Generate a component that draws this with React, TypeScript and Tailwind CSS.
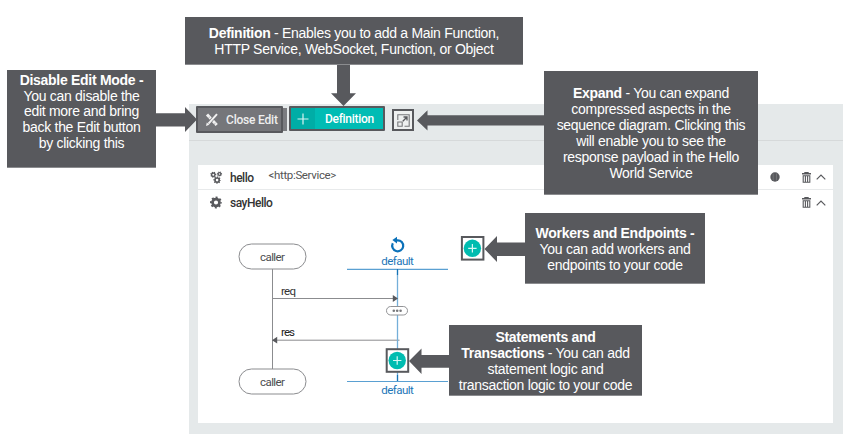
import React from "react";

function Callout({ box, lines }: { box: string; lines: React.ReactNode[] }) {
  return (
    <div className={`absolute flex flex-col items-center border-b border-[#8b8c8f] bg-[#58595d] text-center font-['Liberation_Sans',Arial,sans-serif] text-[14px] tracking-[-0.29px] text-white ${box}`}>
      {lines.map((line, i) => (
        <p key={i} className="whitespace-nowrap">{line}</p>
      ))}
    </div>
  );
}

function Gear({ cx, cy, r, hole }: { cx: number; cy: number; r: number; hole: number }) {
  const body = r * 0.8;
  const tooth = (body * Math.PI) / 8;
  return (
    <g fill="none" stroke="#58595d">
      <circle cx={cx} cy={cy} r={(body + hole) / 2} strokeWidth={body - hole} />
      <circle cx={cx} cy={cy} r={body} strokeWidth={(r - body) * 2} strokeDasharray={`${tooth} ${tooth}`} strokeDashoffset={tooth / 2} />
    </g>
  );
}

function Trash() {
  return (
    <svg className="h-[11px] w-[9px]" viewBox="0 0 9 11">
      <path d="M3 1V.5h3V1M0 1.8h9" stroke="#58595d" strokeWidth="1.4" fill="none" />
      <path d="M1.2 3.8h6.6v6.4H1.2zM3.4 4v6M5.6 4v6" stroke="#58595d" strokeWidth="1.1" fill="none" />
    </svg>
  );
}

function Chevron() {
  return (
    <svg className="h-[6px] w-[10px]" viewBox="0 0 10 6">
      <path d="M.7 5.3 5 1l4.3 4.3" stroke="#58595d" strokeWidth="1.2" fill="none" />
    </svg>
  );
}

function Plus({ cx, cy }: { cx: number; cy: number }) {
  return (
    <g>
      <rect x={cx - 10.5} y={cy - 11.3} width="21.5" height="22.6" fill="#fff" stroke="#58595d" strokeWidth="2" />
      <circle cx={cx} cy={cy} r="8.7" fill="#00bcb0" />
      <path d={`M${cx - 4.2} ${cy}h8.4M${cx} ${cy - 4.2}v8.4`} stroke="#d7f7f4" strokeWidth="1.2" />
    </g>
  );
}

function Diagram() {
  return (
    <svg className="block h-[208px] w-[635px] font-[Roboto,sans-serif] text-[11.5px]" viewBox="198 215 635 208">
      <g fill="none" stroke="#8b8c8f" strokeWidth="1">
        <path d="M272.5 269v100" />
        <rect x="239" y="244" width="67" height="25" rx="12.5" />
        <rect x="239" y="369" width="67" height="25" rx="12.5" />
        <path d="M272 298.5h122M277 340.2h122.500" />
      </g>
      <path d="M347 269.300h101M347 381.500h101" stroke="#5aa0d2" strokeWidth="1.2" />
      <path d="M397.500 269v112" stroke="#74afd9" strokeWidth="1.3" />
      <path d="M397.500 269v6M397.500 375v6" stroke="#1673b5" strokeWidth="1.2" />
      <path d="M392.800 295.100l5.200 3.400-5.200 3.400zM277.200 336.800l-5.200 3.400 5.200 3.400z" fill="#58595d" />
      <rect x="386.500" y="306.500" width="21" height="8.500" rx="4.200" fill="#fff" stroke="#929396" />
      <g fill="#77787b">
        <circle cx="393.800" cy="310.700" r="1.300" />
        <circle cx="397.200" cy="310.700" r="1.300" />
        <circle cx="400.600" cy="310.700" r="1.300" />
      </g>
      <path d="M392.800 243.300a5.500 5.500 0 1 0 4.700-3h-2" stroke="#0b71b9" strokeWidth="2.200" fill="none" />
      <path d="M397 236.800v6.600l-4.600-3.300z" fill="#0b71b9" />
      <g fill="#4c4d50" textAnchor="middle">
        <text x="272.500" y="261" textLength="25">caller</text>
        <text x="272.500" y="386" textLength="25">caller</text>
      </g>
      <text x="281" y="294.500" textLength="15" fill="#333">req</text>
      <text x="281" y="336" textLength="14" fill="#222">res</text>
      <g fill="#1c76b8" textAnchor="middle">
        <text x="397.500" y="265" textLength="32.500">default</text>
        <text x="397.500" y="394.300" textLength="32.500">default</text>
      </g>
      <Plus cx={472.4} cy={248.3} />
      <Plus cx={397.2} cy={360.5} />
    </svg>
  );
}

function Toolbar() {
  return (
    <div className="flex h-[37px] items-start border-b border-[#d6d9da] pl-[7px] pt-[2px] font-[Roboto,sans-serif] text-[12px] font-medium text-white">
      <button className="flex h-[27px] w-[87px] items-center rounded-[1px] border-2 border-[#58595d] bg-[#75767a] pl-[7px]">
        <svg className="h-[14px] w-[14px]" viewBox="0 0 14 14">
          <path d="M2 1.600l9.700 10.400" stroke="#f1f1f1" strokeWidth="3" />
          <path d="M3.400 5.200l1.200-1.100M9.200 11.300l1.200-1.100" stroke="#75767a" strokeWidth=".7" />
          <path d="M11.500 1.500 3.300 10.800" stroke="#75767a" strokeWidth="3.400" />
          <path d="M12 1.200 3.500 10.600" stroke="#f1f1f1" strokeWidth="2" />
          <path d="M1 13l.8-3.500 2.600 2.200z" fill="#f1f1f1" />
        </svg>
        <span className="ml-[7px] whitespace-nowrap tracking-[-0.2px] text-[#eeeeee]">Close Edit</span>
      </button>
      <span className="mt-[2px] h-[23px] w-[4px] bg-[#7b7c80]" />
      <button className="ml-[2px] flex h-[25px] w-[96px] items-center rounded-[1px] border-2 border-[#58595d] bg-[#00bcb4]">
        <span className="flex h-full w-[24px] items-center justify-center bg-[#00ada6]">
          <svg className="h-[12px] w-[12px]" viewBox="0 0 12 12">
            <path d="M.500 6h11M6 .500v11" stroke="#d8f4f2" strokeWidth="1.200" />
          </svg>
        </span>
        <span className="ml-[10px] tracking-[-0.3px]">Definition</span>
      </button>
      <button className="ml-[7px] mt-[3px] flex h-[22px] w-[22px] items-center justify-center border-2 border-[#58595d] bg-[#eef0f0]">
        <svg className="h-[13px] w-[13px]" viewBox="0 0 13 13" fill="none" stroke="#77787b">
          <path d="M.800 6V.800h11.400v11.400H7.500M.800 8h4.400v4.200H.800z" strokeWidth="1.100" />
          <path d="M5.800 7.200 9.500 3.500M6.500 3h3.500v3.500" stroke="#58595d" strokeWidth="1.300" />
        </svg>
      </button>
    </div>
  );
}

export default function App() {
  return (
    <main className="relative h-[445px] w-[852px] overflow-hidden bg-white pl-[189px] pt-[104px]">
      <section className="h-[330px] w-[654px] bg-[#e5e9ea]">
        <Toolbar />
        <div className="ml-[9px] mt-[24px] h-[258px] w-[635px] bg-white font-[Roboto,sans-serif] text-[12px] text-[#333]">
          <header className="flex h-[25px] items-center border-b border-[#e8eaeb] pl-[12px] pr-[7px]">
            <svg className="h-[13px] w-[13px]" viewBox="0 0 13 13">
              <Gear cx={3.3} cy={3.7} r={3} hole={1} />
              <Gear cx={9.5} cy={3} r={2.6} hole={0.8} />
              <Gear cx={7.1} cy={9.1} r={3.7} hole={1.3} />
            </svg>
            <span className="ml-[7px] mt-[2px] font-medium tracking-[-0.5px]">hello</span>
            <span className="-mt-[2px] ml-[15px] text-[11.5px] tracking-[-0.35px] text-[#555]">&lt;http:Service&gt;</span>
            <svg className="ml-auto mr-[22px] h-[10px] w-[10px]" viewBox="0 0 10 10">
              <circle cx="5" cy="5" r="4.700" fill="#58595d" />
              <path d="M3.200 1.500v7M6.500 1.500v7" stroke="#85868a" strokeWidth=".6" />
            </svg>
            <Trash />
            <span className="ml-[5px] flex"><Chevron /></span>
          </header>
          <div className="flex h-[25px] items-center pl-[12px] pr-[7px]">
            <svg className="h-[13px] w-[13px]" viewBox="0 0 13 13"><Gear cx={6} cy={6.5} r={6} hole={2.1} /></svg>
            <span className="ml-[7px] font-medium tracking-[-0.5px]">sayHello</span>
            <span className="ml-auto flex"><Trash /></span>
            <span className="ml-[5px] flex"><Chevron /></span>
          </div>
          <Diagram />
        </div>
      </section>

      <svg className="absolute inset-0 h-[445px] w-[852px]" viewBox="0 0 852 445" fill="#58595d">
        <path d="M156 113.300h29V107l12 12.500-12 12.500v-5.500h-29z" />
        <path d="M337 65h13v28.300h6L343.500 106 331 93.300h6z" />
        <path d="M544 115.200H427.500v-5L417 120.500l10.500 10v-5H544z" />
        <path d="M526 242.500h-29V236l-12.500 13 12.500 13v-6h29z" />
        <path d="M450 355h-28.500v-6.500L409 361l12.500 13v-6.200H450z" />
      </svg>

      <Callout box="left-[7px] top-[70px] h-[98px] w-[149px] pt-[3px] leading-[15.700px]" lines={[<b>Disable Edit Mode -</b>, "You can disable the", "edit more and bring", "back the Edit button", "by clicking this"]} />
      <Callout box="left-[185px] top-[17px] h-[48px] w-[338px] pt-[8px] leading-[16px]" lines={[<><b>Definition</b> - Enables you to add a Main Function,</>, "HTTP Service, WebSocket, Function, or Object"]} />
      <Callout box="left-[544px] top-[71px] h-[124px] w-[214px] pt-[14px] leading-[16px]" lines={[<><b>Expand</b> - You can expand</>, "compressed aspects in the", "sequence diagram. Clicking this", "will enable you to see the", "response payload in the Hello", "World Service"]} />
      <Callout box="left-[525px] top-[213px] h-[71px] w-[180px] pt-[12px] leading-[16px]" lines={[<b>Workers and Endpoints -</b>, "You can add workers and", "endpoints to your code"]} />
      <Callout box="left-[449px] top-[325px] h-[71px] w-[193px] pt-[4px] leading-[16px]" lines={[<b>Statements and</b>, <><b>Transactions</b> - You can add</>, "statement logic and", "transaction logic to your code"]} />
    </main>
  );
}
